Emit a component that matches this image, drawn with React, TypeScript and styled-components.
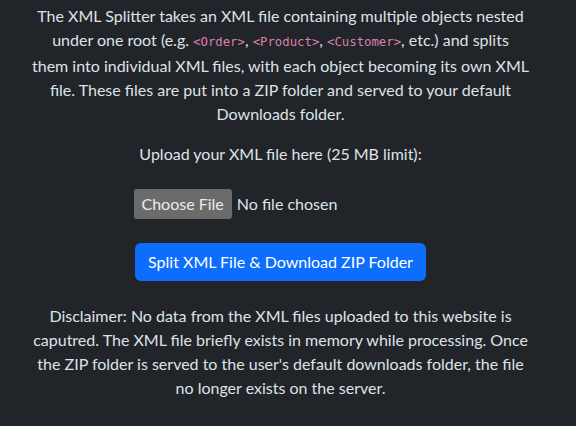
import React from "react";
import styled, { createGlobalStyle } from "styled-components";

const GlobalStyle = createGlobalStyle`
  html, body {
    margin: 0;
    padding: 0;
    background: #212529;
  }
  body {
    color: #dee2e6;
    font-family: Lato, "Open Sans", "Liberation Sans", sans-serif;
    font-size: 16px;
    line-height: 24px;
  }
  * { box-sizing: border-box; }
`;

const Page = styled.main`
  display: flex;
  flex-direction: column;
  align-items: center;
  padding: 4px 39px 40px 24px;
  text-align: center;
`;

const Paragraph = styled.p<{ $gap: number }>`
  margin: 0 0 ${(p) => p.$gap}px;
  width: 100%;
`;

const Line = styled.span`
  display: block;
  white-space: nowrap;
`;

const Code = styled.code`
  font-family: "DejaVu Sans Mono", "Liberation Mono", monospace;
  font-size: 12.3px;
  color: #de7eac;
`;

const FileRow = styled.div`
  width: 294px;
  height: 30px;
  display: flex;
  align-items: center;
  gap: 5px;
  margin-top: -1px;
  margin-bottom: 24px;
`;

const ChooseButton = styled.button`
  height: 30px;
  padding: 0 8px;
  border: none;
  border-radius: 3px;
  background: #6b6b6b;
  color: #ececec;
  font: inherit;
  cursor: pointer;
`;

const FileName = styled.span`
  color: #dee2e6;
`;

const SubmitButton = styled.button`
  height: 38px;
  padding: 6px 13px;
  border: none;
  border-radius: 6px;
  background: #0d6efd;
  color: #ffffff;
  font: inherit;
  cursor: pointer;
  margin-bottom: 23px;
`;

export default function App() {
  return (
    <>
      <GlobalStyle />
      <Page>
        <Paragraph $gap={16}>
          <Line>The XML Splitter takes an XML file containing multiple objects nested</Line>
          <Line>
            under one root (e.g. <Code>&lt;Order&gt;</Code>, <Code>&lt;Product&gt;</Code>,{" "}
            <Code>&lt;Customer&gt;</Code>, etc.) and splits
          </Line>
          <Line>them into individual XML files, with each object becoming its own XML</Line>
          <Line>file. These files are put into a ZIP folder and served to your default</Line>
          <Line>Downloads folder.</Line>
        </Paragraph>
        <Paragraph $gap={24}>Upload your XML file here (25{"\u202F"}MB limit):</Paragraph>
        <FileRow>
          <ChooseButton type="button">Choose File</ChooseButton>
          <FileName>No file chosen</FileName>
        </FileRow>
        <SubmitButton type="button">Split XML File &amp; Download ZIP Folder</SubmitButton>
        <Paragraph $gap={0}>
          <Line>Disclaimer: No data from the XML files uploaded to this website is</Line>
          <Line>caputred. The XML file briefly exists in memory while processing. Once</Line>
          <Line>the ZIP folder is served to the user's default downloads folder, the file</Line>
          <Line>no longer exists on the server.</Line>
        </Paragraph>
      </Page>
    </>
  );
}
